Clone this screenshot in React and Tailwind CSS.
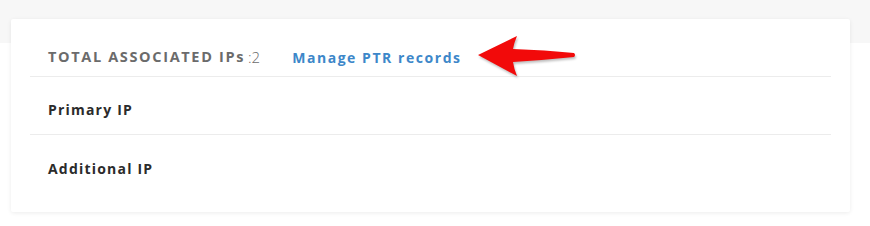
import React from 'react';

function RedArrow() {
  return (
    <svg width="110" height="56" viewBox="0 0 110 56" className="drop-shadow-[1px_2px_1px_rgba(0,0,0,0.25)]">
      <path
        d="M8 25 L47 6 Q44 13 43 19 Q75 20 104 23 Q106 25 104 27 Q75 30 43 32 Q44 39 47 46 Z"
        fill="#f20a0a"
      />
    </svg>
  );
}

export default function App() {
  return (
    <div className="relative h-[226px] w-[870px] bg-white font-['Open_Sans',sans-serif]">
      <div className="h-[43px] w-full bg-[#f7f7f7]" />
      <div className="absolute left-[11px] top-[19px] h-[193px] w-[839px] rounded-[2px] bg-white shadow-[0_1px_4px_rgba(0,0,0,0.08)]">
        <div className="mx-[19px] flex h-[58px] items-end border-b border-[#ececec] pb-[8px]">
          <span className="pl-[18px] text-[14.5px] font-bold tracking-[1.65px] text-[#6b6b6b]">TOTAL ASSOCIATED IPs</span>
          <span className="ml-[3px] text-[15px] font-light text-[#6b6b6b]">:2</span>
          <span className="ml-[32px] text-[14px] font-bold tracking-[1.55px] text-[#3d87c9]">Manage PTR records</span>
          <div className="ml-[8px] mb-[-18px]">
            <RedArrow />
          </div>
        </div>
        <div className="mx-[19px] flex h-[58px] items-center border-b border-[#ececec] pl-[18px] pt-[8px] text-[14px] font-bold tracking-[1.2px] text-[#2b2b2b]">
          Primary IP
        </div>
        <div className="mx-[19px] flex h-[58px] items-center pl-[18px] pt-[8px] text-[14px] font-bold tracking-[1.2px] text-[#2b2b2b]">
          Additional IP
        </div>
      </div>
    </div>
  );
}
